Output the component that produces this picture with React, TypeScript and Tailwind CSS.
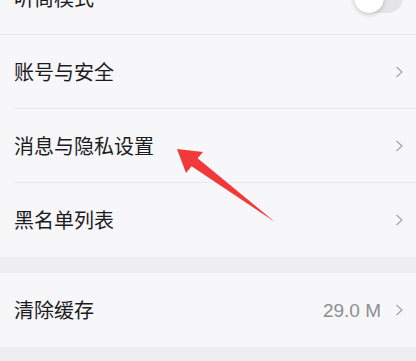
import React from 'react';

const font = { fontFamily: '"Noto Sans CJK SC", "Noto Sans", sans-serif' };

const Chevron = () => (
	<svg width="9" height="12" viewBox="0 0 9 12" className="shrink-0">
		<path d="M1.5 1 L7 6 L1.5 11" fill="none" stroke="#a3a3a6" strokeWidth="1.2" />
	</svg>
);

const Row = ({ title, value, last }: { title: string; value?: string; last?: boolean }) => (
	<div className="h-[74px] pl-[14px] relative">
		<div className="h-full flex items-center justify-between pr-[12px]">
			<span className="text-[20px] text-[#1c1c1e] leading-none">{title}</span>
			<div className="flex items-center gap-[14px]">
				{value && <span className="text-[19px] text-[#8e8e92] leading-none" style={{ fontFamily: '"Liberation Sans", sans-serif' }}>{value}</span>}
				<Chevron />
			</div>
		</div>
		{!last && <div className="absolute left-[14px] right-0 bottom-0 h-px bg-[#e6e5e8]" />}
	</div>
);

const App = () => {
	return (
		<div className="w-[416px] h-[361px] overflow-hidden bg-[#eeedf0] relative" style={font}>
			<div className="bg-[#f7f6f9] -mt-[39px]">
				<div className="h-[74px] pl-[14px] pr-[13px] flex items-center justify-between border-b border-[#e6e5e8]">
					<span className="text-[20px] text-[#1c1c1e] leading-none">听筒模式</span>
					<div className="w-[49px] h-[30px] rounded-full bg-[#e4e3e6] relative">
						<div className="absolute left-0 top-0 w-[30px] h-[30px] rounded-full bg-white shadow-[0_2px_4px_rgba(0,0,0,0.18)]" />
					</div>
				</div>
				<Row title="账号与安全" />
				<Row title="消息与隐私设置" />
				<Row title="黑名单列表" last />
			</div>
			<div className="h-[16px]" />
			<div className="bg-[#f7f6f9]">
				<Row title="清除缓存" value="29.0 M" last />
			</div>

			<svg className="absolute left-0 top-0 pointer-events-none" width="416" height="361">
				<polygon points="177,149 203,152 197.6,158.2 275,222 191.6,166.2 186,173" fill="#f2393a" />
			</svg>
		</div>
	);
};

export default App;
